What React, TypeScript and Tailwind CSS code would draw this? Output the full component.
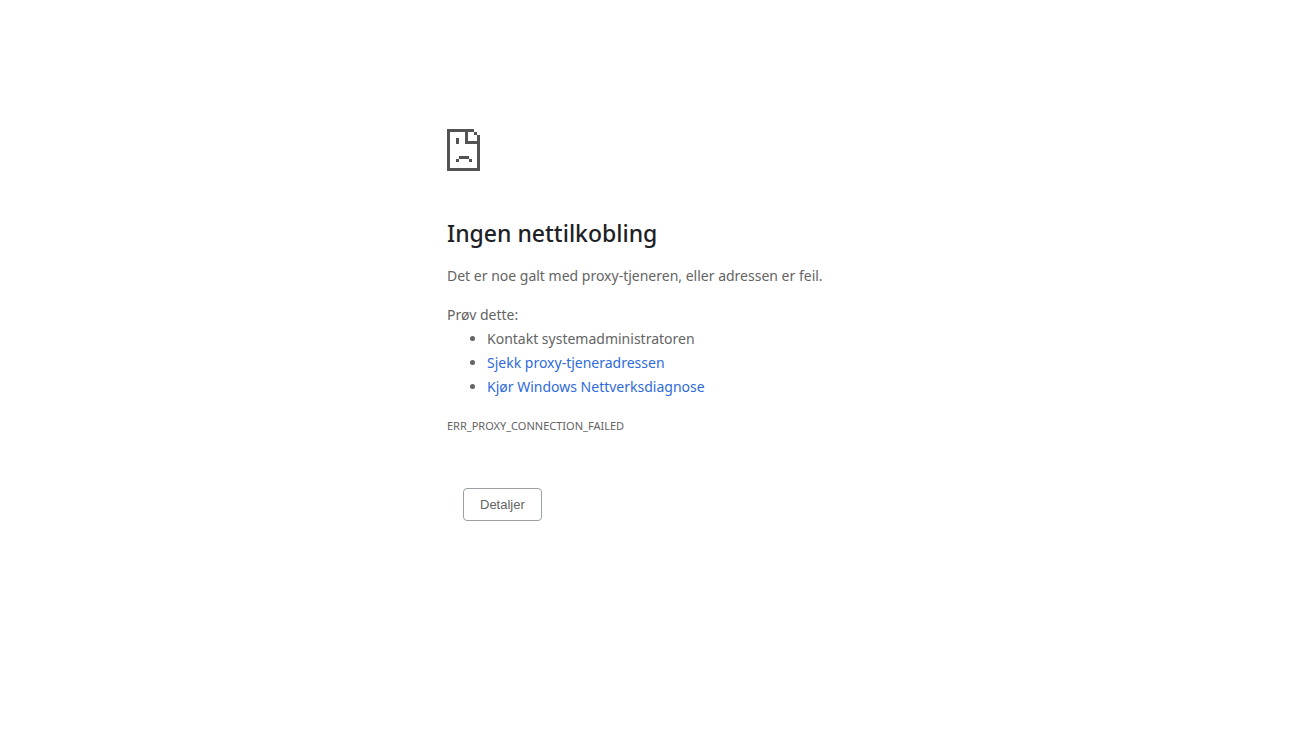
const suggestionLinks = ['Sjekk proxy-tjeneradressen', 'Kjør Windows Nettverksdiagnose'];

function SadPageIcon() {
  return (
    <svg
      className="block h-[42px] w-[33px] fill-[#535353]"
      viewBox="0 0 33 42"
      shapeRendering="crispEdges"
      aria-hidden="true"
    >
      <path d="M0 0H27V3H21V12H33V42H0ZM3 3V39H30V15H18V3Z" fillRule="evenodd" />
      <path d="M27 3H30V6H33V12H30V6H27Z" />
      <path d="M9 9H12V15H9Z" />
      <path d="M12 27H22V30H12ZM9 30H12V33H9ZM22 30H25V33H22Z" />
    </svg>
  );
}

export default function App() {
  return (
    <main className="min-h-screen bg-white px-6 pt-[129px] pb-10 font-['Noto_Sans',sans-serif] text-sm leading-6 text-[#646464]">
      <div className="mx-auto w-full max-w-[404px]">
        <SadPageIcon />
        <h1 className="mt-12 text-[23px] leading-7 font-medium text-[#202124]">Ingen nettilkobling</h1>
        <p className="mt-[17px]">Det er noe galt med proxy-tjeneren, eller adressen er feil.</p>
        <p className="mt-[15px]">Prøv dette:</p>
        <ul className="list-disc pl-10">
          <li>Kontakt systemadministratoren</li>
          {suggestionLinks.map((label) => (
            <li key={label}>
              <a href="#" className="text-[#2f6bd8]">
                {label}
              </a>
            </li>
          ))}
        </ul>
        <p className="mt-[15px] text-[11px] leading-6">ERR_PROXY_CONNECTION_FAILED</p>
        <button
          type="button"
          className="mt-[50px] ml-4 rounded border border-[#9aa0a6] px-4 py-1.5 font-['Liberation_Sans',sans-serif] text-[13px] leading-[19px]"
        >
          Detaljer
        </button>
      </div>
    </main>
  );
}
